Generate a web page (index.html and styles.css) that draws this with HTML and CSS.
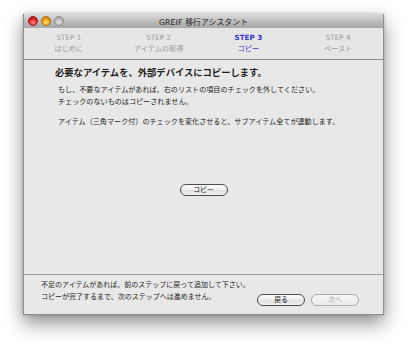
FILE: index.html
```html
<!DOCTYPE html>
<html lang="ja">
  <head>
    <meta charset="UTF-8" />
    <meta name="viewport" content="width=device-width, initial-scale=1.0" />
    <title>GREIF 移行アシスタント</title>
    <link rel="stylesheet" href="styles.css">
  </head>
  <body>
    <div class="desk">
      <div class="window">
        <!-- Title bar -->
        <div class="titlebar">
          <div class="lights">
            <span class="light red"></span>
            <span class="light orange"></span>
            <span class="light grey"></span>
          </div>
          <div class="title">GREIF 移行アシスタント</div>
          <div></div>
        </div>

        <!-- Steps -->
        <div class="steps">
          <div class="step">
            <div class="step-num">STEP 1</div>
            <div class="step-name">はじめに</div>
          </div>
          <div class="step">
            <div class="step-num">STEP 2</div>
            <div class="step-name">アイテムの取得</div>
          </div>
          <div class="step active">
            <div class="step-num">STEP 3</div>
            <div class="step-name">コピー</div>
          </div>
          <div class="step">
            <div class="step-num">STEP 4</div>
            <div class="step-name">ペースト</div>
          </div>
        </div>

        <!-- Main content -->
        <div class="content">
          <h1>必要なアイテムを、外部デバイスにコピーします。</h1>
          <p>
            もし、不要なアイテムがあれば、右のリストの項目のチェックを外してください。<br>
            チェックのないものはコピーされません。
          </p>
          <p class="note">アイテム（三角マーク付）のチェックを変化させると、サブアイテム全てが連動します。</p>
          <div class="copy-row">
            <button class="pill">コピー</button>
          </div>
        </div>

        <!-- Footer -->
        <div class="footer">
          <p>
            不足のアイテムがあれば、前のステップに戻って追加して下さい。<br>
            コピーが完了するまで、次のステップへは進めません。
          </p>
          <div class="nav">
            <button class="pill">戻る</button>
            <button class="pill" disabled>次へ</button>
          </div>
        </div>
      </div>
    </div>
  </body>
</html>
```

FILE: styles.css
```css
/* Basic styling */
body {
  margin: 0;
  padding: 0;
  background-color: #fff;
  font-family: "DejaVu Sans", "Noto Sans CJK JP", sans-serif;
  color: #1e1e1e;
}

.desk {
  padding: 14px 0 0 23px;
  height: 335px;
}

.window {
  width: 361px;
  box-sizing: border-box;
  background-color: #e8e8e8;
  border: 1px solid #8e8e8e;
  border-top: none;
  box-shadow: 0 8px 18px rgba(0, 0, 0, 0.45), 0 0 3px rgba(0, 0, 0, 0.2);
}

/* Title bar */
.titlebar {
  height: 14px;
  display: grid;
  grid-template-columns: 1fr auto 1fr;
  align-items: center;
  background: linear-gradient(#dcdcdc, #b9b9b9 60%, #a6a6a6);
}

.lights {
  display: flex;
  gap: 3px;
  padding-left: 4px;
}

.light {
  width: 10px;
  height: 10px;
  border-radius: 50%;
  box-sizing: border-box;
}

.red {
  background: radial-gradient(circle at 50% 70%, #ff8c8c, #d21b1b 60%, #8c0b0b);
  border: 1px solid #9a1a1a;
}

.orange {
  background: radial-gradient(circle at 50% 70%, #ffe07a, #e9960f 60%, #a85f00);
  border: 1px solid #a66a10;
}

.grey {
  background: radial-gradient(circle at 50% 70%, #e4e4e4, #b4b4b4 60%, #8a8a8a);
  border: 1px solid #8e8e8e;
}

.title {
  font-size: 7.8px;
  color: #222;
  letter-spacing: 0.1px;
}

/* Steps */
.steps {
  height: 31px;
  display: grid;
  grid-template-columns: repeat(4, 1fr);
  background-color: #e6e6e6;
  border-bottom: 1px solid #8f8f8f;
  box-sizing: content-box;
}

.step {
  text-align: center;
  padding-top: 4px;
  color: #9c9c9c;
}

.step-num,
.step-name {
  font-size: 7.2px;
  line-height: 11px;
}

.step.active {
  color: #3535c8;
}

.step.active .step-num {
  font-weight: bold;
}

/* Content */
.content {
  height: 215px;
  box-sizing: border-box;
  padding: 7px 0 0 31px;
  border-bottom: 1px solid #9e9e9e;
  background-color: #e8e8e8;
}

h1 {
  margin: 0;
  font-size: 9.3px;
  line-height: 12px;
  font-weight: bold;
}

.content p {
  margin: 5px 0 0 3px;
  font-size: 7.1px;
  line-height: 12px;
}

.content p.note {
  margin-top: 8px;
}

.copy-row {
  margin-top: 56px;
  padding-right: 31px;
  display: flex;
  justify-content: center;
}

.pill {
  width: 48px;
  height: 12px;
  padding: 0;
  border: 1px solid #4a4a4a;
  border-radius: 6px;
  background: linear-gradient(#ffffff, #ececec 50%, #dedede 51%, #f4f4f4);
  font-family: "DejaVu Sans", "Noto Sans CJK JP", sans-serif;
  font-size: 6.8px;
  line-height: 10px;
  color: #222;
}

.pill:disabled {
  border-color: #ababab;
  color: #a8a8a8;
  background: linear-gradient(#f6f6f6, #ececec);
}

/* Footer */
.footer {
  height: 39px;
  display: flex;
  justify-content: space-between;
  padding: 4px 24px 0 17px;
  box-sizing: border-box;
}

.footer p {
  margin: 0;
  font-size: 7px;
  line-height: 12px;
}

.nav {
  display: flex;
  gap: 6px;
  margin-top: 15px;
}
```
